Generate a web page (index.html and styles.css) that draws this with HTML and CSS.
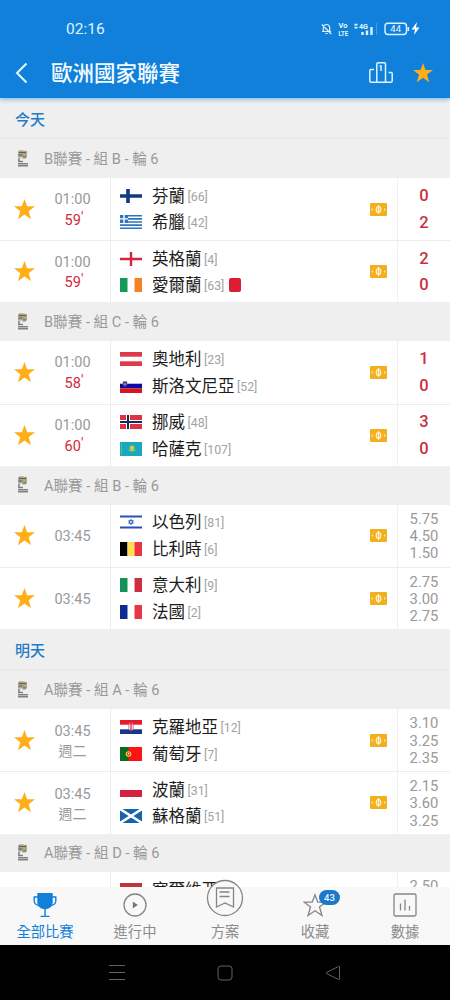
FILE: index.html
```html
<!DOCTYPE html>
<html lang="zh-Hant">
<head>
    <meta charset="UTF-8">
    <meta name="viewport" content="width=device-width, initial-scale=1.0">
    <title>歐洲國家聯賽</title>
    <link rel="stylesheet" href="styles.css">
</head>
<body>

    <!-- shared icons and flags -->
    <svg class="defs" width="0" height="0">
        <symbol id="star" viewBox="0 0 20 20"><path d="M10 0l2.500 7H20l-6 4.600 2.200 7.600L10 14.700l-6.200 4.500L6 11.600 0 7h7.500z"/></symbol>
        <symbol id="cash" viewBox="0 0 17 13">
            <rect width="17" height="13" rx="1" fill="#f2b01e"/>
            <ellipse cx="8.500" cy="6.500" rx="2.300" ry="3" fill="#f5c04c" stroke="#fff6d8" stroke-width="1.100"/>
            <path d="M8.500 2v9M2.300 5.500v2M14.700 5.500v2" stroke="#fff6d8" stroke-width="1"/>
        </symbol>
        <symbol id="cup" viewBox="0 0 12 18">
            <path d="M1 2.500L3 1l7 1v6.500H1z" fill="#aaa68f"/>
            <path d="M2 3.500h7M1.500 6h4M6 8h3" stroke="#5f5e54"/>
            <path d="M4 2.500h4M7 5.500h2" stroke="#c9a65c"/>
            <path d="M1 9h2v3H1z" fill="#999"/>
            <path d="M5 9.500h4" stroke="#c8c3ae"/>
            <path d="M1 12.500h5M1 14.700h10M1 16.800h10" stroke="#808080" stroke-width="1.500"/>
        </symbol>

        <symbol id="fi" viewBox="0 0 22 14"><path fill="#fff" d="M0 0h22v14H0z"/><path d="M0 7h22M8 0v14" stroke="#123a82" stroke-width="3.600"/></symbol>
        <symbol id="gr" viewBox="0 0 22 14"><path fill="#fff" d="M0 0h22v14H0z"/><path d="M0 .8h22M0 3.900h22M0 7h22M0 10.100h22M0 13.200h22" stroke="#2d76bd" stroke-width="1.600"/><path fill="#2d76bd" d="M0 0h8v7.800H0z"/><path d="M0 3.900h8M4 0v7.800" stroke="#fff" stroke-width="1.400"/></symbol>
        <symbol id="en" viewBox="0 0 22 14"><path fill="#fff" d="M0 0h22v14H0z"/><path d="M0 7h22M11 0v14" stroke="#d3263f" stroke-width="2.400"/></symbol>
        <symbol id="ie" viewBox="0 0 22 14"><path fill="#fff" d="M0 0h22v14H0z"/><path fill="#169b56" d="M0 0h7.500v14H0z"/><path fill="#f58220" d="M14.500 0H22v14h-7.500z"/></symbol>
        <symbol id="at" viewBox="0 0 22 14"><path fill="#e0394b" d="M0 0h22v14H0z"/><path fill="#fff" d="M0 4.700h22v4.600H0z"/></symbol>
        <symbol id="si" viewBox="0 0 22 14"><path fill="#fff" d="M0 0h22v4.700H0z"/><path fill="#0a0aa5" d="M0 4.700h22v4.600H0z"/><path fill="#d8141c" d="M0 9.300h22V14H0z"/><path d="M3 2.500h4v3.500L5 7.500 3 6z" fill="#1f3c9c" stroke="#d66" stroke-width=".5"/><path d="M4 5.500l1-1.500 1 1.500z" fill="#fff"/></symbol>
        <symbol id="no" viewBox="0 0 22 14"><path fill="#dd3344" d="M0 0h22v14H0z"/><path d="M0 7h22M8 0v14" stroke="#fff" stroke-width="4"/><path d="M0 7h22M8 0v14" stroke="#14295c" stroke-width="2"/></symbol>
        <symbol id="kz" viewBox="0 0 22 14"><path fill="#18a9bf" d="M0 0h22v14H0z"/><circle cx="12" cy="5.800" r="2.400" fill="#c9cf3b"/><path d="M7.500 7q4.500 5 9 0-4.500 2.500-9 0" fill="#c9cf3b"/><path d="M1.500 1v12" stroke="#5fb79b" stroke-width="1"/></symbol>
        <symbol id="il" viewBox="0 0 22 14"><path fill="#fff" d="M0 0h22v14H0z"/><path d="M0 1.500h22M0 12.500h22" stroke="#2a4fb8" stroke-width="2"/><path d="M11 4.300l2.300 4H8.700zM11 9.700l2.300-4H8.700z" fill="none" stroke="#2a4fb8" stroke-width=".8"/></symbol>
        <symbol id="be" viewBox="0 0 22 14"><path d="M0 0h7.500v14H0z"/><path fill="#fddf4f" d="M7.500 0h7v14h-7z"/><path fill="#ee3340" d="M14.500 0H22v14h-7.500z"/></symbol>
        <symbol id="it" viewBox="0 0 22 14"><path fill="#fff" d="M0 0h22v14H0z"/><path fill="#12935a" d="M0 0h7.500v14H0z"/><path fill="#cd2f40" d="M14.500 0H22v14h-7.500z"/></symbol>
        <symbol id="fr" viewBox="0 0 22 14"><path fill="#fff" d="M0 0h22v14H0z"/><path fill="#0b2c94" d="M0 0h7.500v14H0z"/><path fill="#ea3545" d="M14.500 0H22v14h-7.500z"/></symbol>
        <symbol id="hr" viewBox="0 0 22 14"><path fill="#fff" d="M0 0h22v14H0z"/><path fill="#e8192c" d="M0 0h22v4.700H0z"/><path fill="#18358f" d="M0 9.300h22V14H0z"/><path fill="#d9455a" d="M8.500 2.500h5V9L11 11.500 8.500 9z"/><path d="M9.500 4v6M12.500 4v6M8.500 6h5M8.500 8h5" stroke="#f8dede" stroke-width=".7"/></symbol>
        <symbol id="pt" viewBox="0 0 22 14"><path fill="#fb1414" d="M0 0h22v14H0z"/><path fill="#0c6b1c" d="M0 0h8.500v14H0z"/><circle cx="8.500" cy="7" r="2.800" fill="#e4d43a"/><path fill="#e22" d="M7 5.500h3v2L8.500 9 7 7.500z"/><path fill="#fff" d="M7.900 6h1.200v1.400H7.900z"/></symbol>
        <symbol id="pl" viewBox="0 0 22 14"><path fill="#fff" d="M0 0h22v7H0z"/><path fill="#d6213f" d="M0 7h22v7H0z"/></symbol>
        <symbol id="sc" viewBox="0 0 22 14"><path fill="#1b62ad" d="M0 0h22v14H0z"/><path d="M0 0l22 14M22 0L0 14" stroke="#fff" stroke-width="2.600"/></symbol>
        <symbol id="rs" viewBox="0 0 22 14"><path fill="#c4343f" d="M0 0h22v5H0z"/><path fill="#18358f" d="M0 5h22v4.500H0z"/><path fill="#fff" d="M0 9.500h22V14H0z"/></symbol>
    </svg>

    <div class="phone">
        <header class="header">
            <div class="status-bar">
                <span class="clock">02:16</span>
                <svg class="status-icons" width="102" height="16" viewBox="0 0 102 16" fill="none" stroke="#dff3ff">
                    <path d="M2 10.500h9M3.300 10V6.500Q3.500 3.500 6.500 3.500t3.200 3V10M5.300 12.500h2.400M1.800 3.500l9.500 9.500" stroke-width="1.200"/>
                    <text class="tiny" x="18.500" y="7" textLength="9" lengthAdjust="spacingAndGlyphs">Vo</text>
                    <text class="tiny" x="18.500" y="14.500" textLength="9.500" lengthAdjust="spacingAndGlyphs">LTE</text>
                    <path d="M36 2.800v5" stroke-width="3" stroke-dasharray="1.800 1.200"/>
                    <text class="tiny" x="39" y="7.500" textLength="9" lengthAdjust="spacingAndGlyphs">4G</text>
                    <path d="M42.500 14v-3M47 14V9.500M51.500 14V6" stroke-width="2.400"/>
                    <path d="M56.500 2v12" stroke-opacity=".25"/>
                    <rect x="65" y="2.200" width="21.500" height="11.300" rx="3" stroke-width="1.400"/>
                    <path d="M88.300 6v4" stroke-width="1.600"/>
                    <text class="charge" x="75.700" y="11.200" text-anchor="middle">44</text>
                    <path d="M97 1l-5.500 7.500h3.500l-1 5.500 5.500-7.500H96z" fill="#fff" stroke="none"/>
                </svg>
            </div>
            <div class="title-bar">
                <svg class="back" width="14" height="22" viewBox="0 0 14 22" fill="none" stroke="#e6f7ff" stroke-width="2"><path d="M11.500 1.500L2 11l9.500 9.500"/></svg>
                <h1>歐洲國家聯賽</h1>
                <svg class="podium" width="24" height="22" viewBox="0 0 24 22" fill="none" stroke="#dff3ff" stroke-width="1.500"><path d="M5 7.500H1.800q-1 0-1 1V19q0 1.200 1.200 1.200h20q1.200 0 1.200-1.200v-7.500q0-1-1-1H19.500M7.800 20V2q0-1.200 1.200-1.200h6.300q1.200 0 1.200 1.200v18M10.500 4h1.500v5"/></svg>
                <svg class="star" width="20" height="20"><use href="#star"/></svg>
            </div>
        </header>

        <main class="list">
            <h2 class="day">今天</h2>

            <div class="league"><svg class="cup"><use href="#cup"/></svg>B聯賽 - 組 B - 輪 6</div>
            <div class="match">
                <svg class="star fav"><use href="#star"/></svg>
                <div class="time">01:00<span class="minute">59<sup>'</sup></span></div>
                <div class="teams">
                    <div class="team"><svg class="flag"><use href="#fi"/></svg>芬蘭<small>[66]</small></div>
                    <div class="team"><svg class="flag"><use href="#gr"/></svg>希臘<small>[42]</small></div>
                </div>
                <svg class="cash"><use href="#cash"/></svg>
                <div class="score"><span>0</span><span>2</span></div>
            </div>
            <div class="match">
                <svg class="star fav"><use href="#star"/></svg>
                <div class="time">01:00<span class="minute">59<sup>'</sup></span></div>
                <div class="teams">
                    <div class="team"><svg class="flag"><use href="#en"/></svg>英格蘭<small>[4]</small></div>
                    <div class="team"><svg class="flag"><use href="#ie"/></svg>愛爾蘭<small>[63]</small><i class="red-card"></i></div>
                </div>
                <svg class="cash"><use href="#cash"/></svg>
                <div class="score"><span>2</span><span>0</span></div>
            </div>

            <div class="league"><svg class="cup"><use href="#cup"/></svg>B聯賽 - 組 C - 輪 6</div>
            <div class="match">
                <svg class="star fav"><use href="#star"/></svg>
                <div class="time">01:00<span class="minute">58<sup>'</sup></span></div>
                <div class="teams">
                    <div class="team"><svg class="flag"><use href="#at"/></svg>奧地利<small>[23]</small></div>
                    <div class="team"><svg class="flag"><use href="#si"/></svg>斯洛文尼亞<small>[52]</small></div>
                </div>
                <svg class="cash"><use href="#cash"/></svg>
                <div class="score"><span>1</span><span>0</span></div>
            </div>
            <div class="match">
                <svg class="star fav"><use href="#star"/></svg>
                <div class="time">01:00<span class="minute">60<sup>'</sup></span></div>
                <div class="teams">
                    <div class="team"><svg class="flag"><use href="#no"/></svg>挪威<small>[48]</small></div>
                    <div class="team"><svg class="flag"><use href="#kz"/></svg>哈薩克<small>[107]</small></div>
                </div>
                <svg class="cash"><use href="#cash"/></svg>
                <div class="score"><span>3</span><span>0</span></div>
            </div>

            <div class="league"><svg class="cup"><use href="#cup"/></svg>A聯賽 - 組 B - 輪 6</div>
            <div class="match">
                <svg class="star fav"><use href="#star"/></svg>
                <div class="time">03:45</div>
                <div class="teams">
                    <div class="team"><svg class="flag"><use href="#il"/></svg>以色列<small>[81]</small></div>
                    <div class="team"><svg class="flag"><use href="#be"/></svg>比利時<small>[6]</small></div>
                </div>
                <svg class="cash"><use href="#cash"/></svg>
                <div class="odds"><span>5.75</span><span>4.50</span><span>1.50</span></div>
            </div>
            <div class="match">
                <svg class="star fav"><use href="#star"/></svg>
                <div class="time">03:45</div>
                <div class="teams">
                    <div class="team"><svg class="flag"><use href="#it"/></svg>意大利<small>[9]</small></div>
                    <div class="team"><svg class="flag"><use href="#fr"/></svg>法國<small>[2]</small></div>
                </div>
                <svg class="cash"><use href="#cash"/></svg>
                <div class="odds"><span>2.75</span><span>3.00</span><span>2.75</span></div>
            </div>

            <h2 class="day">明天</h2>

            <div class="league"><svg class="cup"><use href="#cup"/></svg>A聯賽 - 組 A - 輪 6</div>
            <div class="match">
                <svg class="star fav"><use href="#star"/></svg>
                <div class="time">03:45<span class="weekday">週二</span></div>
                <div class="teams">
                    <div class="team"><svg class="flag"><use href="#hr"/></svg>克羅地亞<small>[12]</small></div>
                    <div class="team"><svg class="flag"><use href="#pt"/></svg>葡萄牙<small>[7]</small></div>
                </div>
                <svg class="cash"><use href="#cash"/></svg>
                <div class="odds"><span>3.10</span><span>3.25</span><span>2.35</span></div>
            </div>
            <div class="match">
                <svg class="star fav"><use href="#star"/></svg>
                <div class="time">03:45<span class="weekday">週二</span></div>
                <div class="teams">
                    <div class="team"><svg class="flag"><use href="#pl"/></svg>波蘭<small>[31]</small></div>
                    <div class="team"><svg class="flag"><use href="#sc"/></svg>蘇格蘭<small>[51]</small></div>
                </div>
                <svg class="cash"><use href="#cash"/></svg>
                <div class="odds"><span>2.15</span><span>3.60</span><span>3.25</span></div>
            </div>

            <div class="league"><svg class="cup"><use href="#cup"/></svg>A聯賽 - 組 D - 輪 6</div>
            <div class="match partial">
                <div class="teams">
                    <div class="team"><svg class="flag"><use href="#rs"/></svg>塞爾維亞</div>
                </div>
                <div class="odds"><span>2.50</span></div>
            </div>
        </main>

        <nav class="tabs">
            <a class="tab active">
                <svg width="24" height="24" viewBox="0 0 24 24" fill="none" stroke="#1080da" stroke-width="1.400"><path d="M5 .5h14V10q-1 5-7 5.500Q6 15 5 10z" fill="#1080da"/><path d="M5 4H1.200v4q.3 4 5 4.500M19 4h3.800v4q-.3 4-5 4.500M12 15v8.500M7.500 23.500h9"/></svg>
                全部比賽
            </a>
            <a class="tab">
                <svg width="24" height="24" viewBox="0 0 24 24" fill="none" stroke="#858585" stroke-width="1.300"><circle cx="12" cy="12" r="11"/><path d="M9.800 8.500l5 3.500-5 3.500z" fill="#777" stroke="none"/></svg>
                進行中
            </a>
            <a class="tab plan">
                <svg width="38" height="38" viewBox="0 0 38 38" fill="none" stroke="#858585" stroke-width="1.300"><circle cx="19" cy="19" r="17.500" fill="#f8f8f8"/><path d="M10.500 9h17v19l-8.500-4-8.500 4zM13.500 13h10M13.500 17.500h10"/></svg>
                方案
            </a>
            <a class="tab">
                <svg width="24" height="24" viewBox="0 0 24 24" fill="none" stroke="#858585" stroke-width="1.300"><path d="M12 1.800l2.800 7.400h8L16.500 14l2.500 8.500-7-4.700-7 4.700L7.500 14 1.200 9.200h8z"/></svg>
                <b class="badge">43</b>
                收藏
            </a>
            <a class="tab">
                <svg width="24" height="24" viewBox="0 0 24 24" fill="none" stroke="#858585" stroke-width="1.300"><rect x="1" y="1" width="22" height="22" rx="1.500"/><path d="M7.500 10.500v7M12 6.500v11M16.500 13v4.500"/></svg>
                數據
            </a>
        </nav>

        <footer class="android-nav">
            <svg width="16" height="16" viewBox="0 0 16 16" stroke="#606060"><path d="M0 .5h16M0 7.500h16M0 14.500h16"/></svg>
            <svg width="16" height="16" viewBox="0 0 16 16" fill="none" stroke="#606060"><rect x="1" y="1" width="14" height="14" rx="3"/></svg>
            <svg width="16" height="16" viewBox="0 0 16 16" fill="none" stroke="#606060"><path d="M14.500 2v12q0 1-1 .5L1.500 8.500q-.7-.5 0-1l12-6q1-.5 1 .5z"/></svg>
        </footer>
    </div>

</body>
</html>
```
FILE: styles.css
```css
* {
    box-sizing: border-box;
}

body {
    margin: 0;
    font-family: Roboto, 'Noto Sans CJK TC', sans-serif;
    color: #222;
    background: #fff;
}

svg {
    display: block;
    flex: none;
}

.defs {
    position: absolute;
}

.phone {
    width: 450px;
    height: 1000px;
    display: flex;
    flex-direction: column;
    overflow: hidden;
}

/* header */
.header {
    position: relative;
    z-index: 1;
    flex: none;
    height: 98px;
    background: #1080da;
    box-shadow: 0 1px 5px rgba(16, 128, 218, 0.6);
}

.status-bar {
    display: flex;
    justify-content: space-between;
    align-items: center;
    height: 48px;
    padding: 10px 28px 0 66px;
}

.clock {
    font-size: 15.5px;
    color: #dff3ff;
}

.tiny,
.charge {
    fill: #e6f7ff;
    stroke: none;
    font-size: 6.3px;
    font-weight: 700;
}

.charge {
    font-size: 9.5px;
    font-weight: 400;
}

.title-bar {
    display: flex;
    align-items: center;
    height: 50px;
    padding: 0 17px 0 15px;
}

.title-bar h1 {
    flex: 1;
    margin: 0 0 0 22px;
    padding-top: 2px;
    font-size: 21.5px;
    line-height: 30px;
    font-weight: 500;
    color: #f2fbff;
}

.podium {
    margin-right: 20px;
}

.star {
    fill: #ffae17;
}

/* match list */
.list {
    flex: 1;
    min-height: 0;
    overflow: hidden;
}

.day {
    display: flex;
    align-items: center;
    height: 41.2px;
    margin: 0;
    padding-left: 15px;
    background: #efefef;
    border-bottom: 1px solid #e8e8e8;
    font-size: 15px;
    font-weight: 500;
    color: #1f7cc4;
}

.league {
    display: flex;
    align-items: center;
    height: 38.8px;
    padding: 0 0 2px 17px;
    background: #efefef;
    font-size: 14.6px;
    color: #999;
}

.cup {
    width: 12px;
    height: 18px;
    margin-right: 15px;
}

.match {
    display: grid;
    grid-template-columns: 48px 62px 1fr 27px 53px;
    align-items: center;
    height: 62.25px;
    background: #fff;
}

.match + .match {
    border-top: 1px solid #ececec;
}

.fav {
    width: 21px;
    height: 21px;
    margin-left: 13.5px;
}

.time {
    display: flex;
    flex-direction: column;
    align-items: center;
    padding: 3px 13px 0 0;
    font-size: 14.5px;
    line-height: 20.5px;
    color: #999;
}

.minute {
    color: #d12a3c;
    margin-right: -3px;
}

.minute sup {
    font-size: 14px;
    line-height: 0;
    vertical-align: 3px;
}

.weekday {
    font-size: 14px;
    line-height: 19px;
}

.teams {
    display: flex;
    flex-direction: column;
    justify-content: center;
    height: 100%;
    padding-left: 9px;
    border-left: 1px solid #ececec;
}

.team {
    display: flex;
    align-items: center;
    height: 26.7px;
    padding-top: 2px;
    font-size: 16.5px;
    line-height: 22px;
    color: #1c1c1c;
}

.flag {
    width: 22px;
    height: 14px;
    margin: 0 10px 2px 0;
}

.team small {
    margin-left: 2.5px;
    font-size: 12.3px;
    color: #a2a2a2;
}

.red-card {
    width: 12px;
    height: 14px;
    margin: 0 0 2px 5px;
    border-radius: 2px;
    background: #dc1d35;
}

.cash {
    width: 17px;
    height: 13px;
}

.score,
.odds {
    display: flex;
    flex-direction: column;
    justify-content: center;
    align-items: center;
    height: 100%;
    border-left: 1px solid #f0f0f0;
}

.score {
    padding-top: 1px;
    font-size: 16.5px;
    line-height: 26.7px;
    font-weight: 500;
    color: #c92f40;
}

.odds {
    padding-top: 2px;
    font-size: 14.8px;
    line-height: 17.2px;
    color: #999;
}

/* last row, cut off by the tab bar */
.partial {
    grid-template-columns: 110px 1fr 53px;
}

.partial .teams {
    grid-column: 2;
    justify-content: flex-start;
    padding-top: 4px;
}

.partial .odds {
    justify-content: flex-start;
    padding-top: 6px;
}

/* bottom tabs */
.tabs {
    display: flex;
    flex: none;
    height: 58px;
    background: #f8f8f8;
}

.tab {
    position: relative;
    display: flex;
    flex: 1;
    flex-direction: column;
    align-items: center;
    padding-top: 6px;
    font-size: 14.3px;
    line-height: 20px;
    gap: 5px;
    color: #8c8c8c;
}

.tab.active {
    color: #1080da;
}

.plan svg {
    margin-top: -14px;
}

.badge {
    position: absolute;
    top: 3px;
    left: 49px;
    width: 21px;
    height: 15px;
    border-radius: 8px;
    background: #1c78c8;
    color: #e6f5ff;
    font-size: 9.5px;
    line-height: 15px;
    font-weight: 500;
    text-align: center;
}

.android-nav {
    display: flex;
    flex: none;
    justify-content: center;
    align-items: center;
    gap: 92px;
    height: 55px;
    background: #000;
}
```
